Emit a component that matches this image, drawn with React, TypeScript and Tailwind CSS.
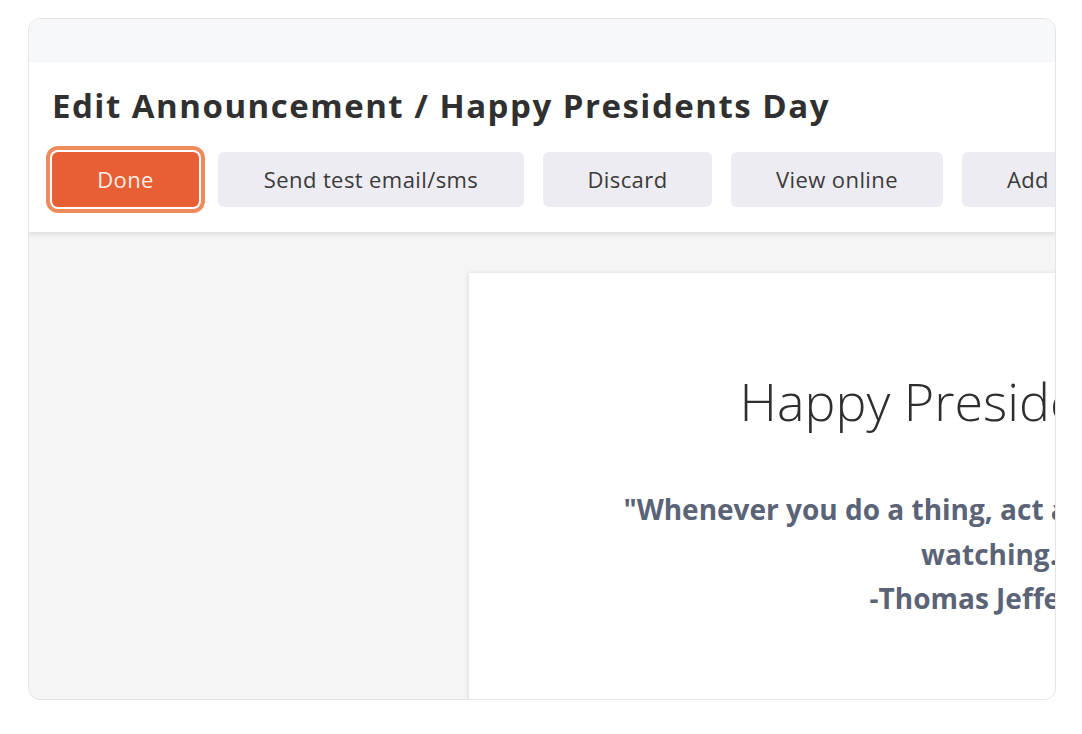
import React from "react";

export default function App() {
  const btn =
    "h-[55px] shrink-0 rounded-[6px] bg-[#edecf2] text-[22px] tracking-[0.4px] text-[#3a3a3a] flex items-center justify-center";
  return (
    <div className="w-[1082px] h-[734px] bg-white pt-[18px] pl-[28px]" style={{ fontFamily: '"Open Sans", sans-serif' }}>
      <div className="w-[1028px] h-[682px] rounded-[12px] border border-[#e4e4e6] overflow-hidden flex flex-col bg-[#f5f5f5]">
        <div className="h-[43px] shrink-0 bg-[#f7f8fa]" />
        <div className="relative z-10 h-[170px] shrink-0 bg-white shadow-[0_2px_5px_rgba(0,0,0,0.12)] pl-[23px] pt-[24px]">
          <h1 className="text-[33px] leading-[40px] font-bold text-[#303030] tracking-[1.5px] whitespace-nowrap">
            Edit Announcement / Happy Presidents Day
          </h1>
          <div className="mt-[26px] flex gap-[19px] whitespace-nowrap">
            <button className="h-[55px] w-[147px] shrink-0 rounded-[6px] bg-[#e85f35] text-[22px] tracking-[0.4px] font-medium text-[#fdeee6] flex items-center justify-center ring-4 ring-[#ef8a5d] ring-offset-2 ring-offset-white">
              Done
            </button>
            <button className={btn + " w-[306px]"}>Send test email/sms</button>
            <button className={btn + " w-[169px]"}>Discard</button>
            <button className={btn + " w-[212px]"}>View online</button>
            <button className={btn + " w-[258px]"}>Add to calendar</button>
          </div>
        </div>
        <div className="flex-1 pl-[440px] pt-[41px] overflow-hidden">
          <div className="w-[1054px] h-[500px] bg-white shadow-[-1px_0_4px_rgba(0,0,0,0.10)] text-center pt-[96px]">
            <div className="text-[52px] leading-[64px] font-light text-[#2e2e2e] whitespace-nowrap">
              Happy Presidents Day
            </div>
            <div className="mt-[54px] text-[28px] leading-[44.5px] font-bold text-[#5b6477] whitespace-nowrap">
              "Whenever you do a thing, act as if all the world were
              <br />
              watching."
              <br />
              -Thomas Jefferson
            </div>
          </div>
        </div>
      </div>
    </div>
  );
}
